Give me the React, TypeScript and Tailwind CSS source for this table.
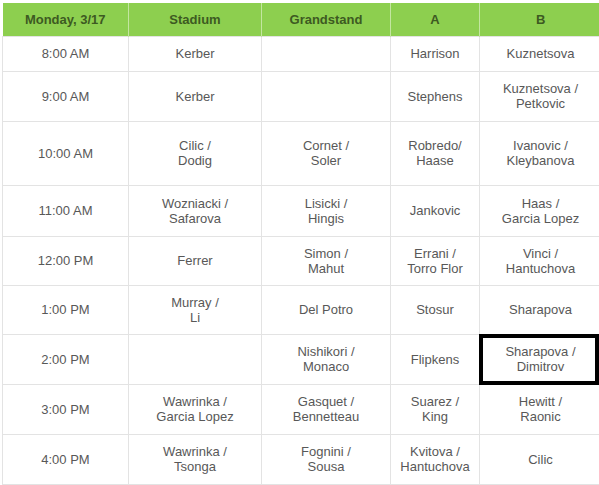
const heads = ["Monday, 3/17", "Stadium", "Grandstand", "A", "B"];

const rows: { h: string; cells: string[][] }[] = [
  { h: "h-[35px]", cells: [["8:00 AM"], ["Kerber"], [], ["Harrison"], ["Kuznetsova"]] },
  { h: "h-[50px]", cells: [["9:00 AM"], ["Kerber"], [], ["Stephens"], ["Kuznetsova /", "Petkovic"]] },
  { h: "h-[64px]", cells: [["10:00 AM"], ["Cilic /", "Dodig"], ["Cornet /", "Soler"], ["Robredo/", "Haase"], ["Ivanovic /", "Kleybanova"]] },
  { h: "h-[51px]", cells: [["11:00 AM"], ["Wozniacki /", "Safarova"], ["Lisicki /", "Hingis"], ["Jankovic"], ["Haas /", "Garcia Lopez"]] },
  { h: "h-[49px]", cells: [["12:00 PM"], ["Ferrer"], ["Simon /", "Mahut"], ["Errani /", "Torro Flor"], ["Vinci /", "Hantuchova"]] },
  { h: "h-[49px]", cells: [["1:00 PM"], ["Murray /", "Li"], ["Del Potro"], ["Stosur"], ["Sharapova"]] },
  { h: "h-[50px]", cells: [["2:00 PM"], [], ["Nishikori /", "Monaco"], ["Flipkens"], ["Sharapova /", "Dimitrov"]] },
  { h: "h-[50px]", cells: [["3:00 PM"], ["Wawrinka /", "Garcia Lopez"], ["Gasquet /", "Bennetteau"], ["Suarez /", "King"], ["Hewitt /", "Raonic"]] },
  { h: "h-[50px]", cells: [["4:00 PM"], ["Wawrinka /", "Tsonga"], ["Fognini /", "Sousa"], ["Kvitova /", "Hantuchova"], ["Cilic"]] },
];

const widths = ["w-[126px]", "w-[133px]", "w-[129px]", "w-[89px]", "w-[122px]"];

export default function App() {
  return (
    <div className="w-[599px] h-[485px] overflow-hidden bg-white pt-[3px] pl-[2px] font-['Liberation_Sans',Arial,sans-serif]">
      <table className="table-fixed border-collapse w-[599px] text-[13px] leading-[15px] text-[#585858]">
        <thead>
          <tr className="h-[33px] bg-[#8dcf4f]">
            {heads.map((t, i) => (
              <th key={t} className={`${widths[i]} p-0 text-center font-bold text-[#3d5a22] border-l border-[#c3e6a0] first:border-l-0`}>
                {t}
              </th>
            ))}
          </tr>
        </thead>
        <tbody>
          {rows.map((r, ri) => (
            <tr key={ri} className={r.h}>
              {r.cells.map((c, ci) => (
                <td key={ci} className="relative p-0 text-center align-middle border border-[#e3e3e3]">
                  {c.map((line, li) => (
                    <div key={li}>{line}</div>
                  ))}
                  {ri === 6 && ci === 4 && (
                    <div className="absolute -left-[1px] -top-[1px] -bottom-[1px] right-[2px] border-4 border-black" />
                  )}
                </td>
              ))}
            </tr>
          ))}
        </tbody>
      </table>
    </div>
  );
}
